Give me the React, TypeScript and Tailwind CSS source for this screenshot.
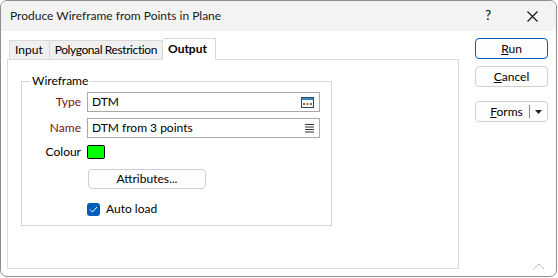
import React from "react";

const font = { fontFamily: 'Lato, "Noto Sans", "Liberation Sans", sans-serif' };

function TypeIcon() {
  return (
    <svg width="13" height="11" viewBox="0 0 13 11">
      <rect x="0.5" y="0.5" width="12" height="10" fill="#ffffff" stroke="#2b4a6b" />
      <rect x="1" y="1" width="11" height="2" fill="#3c87c8" />
      <rect x="2" y="6" width="2" height="2" fill="#9a6b2a" />
      <rect x="5.5" y="6" width="2" height="2" fill="#9a6b2a" />
      <rect x="9" y="6" width="2" height="2" fill="#9a6b2a" />
    </svg>
  );
}

function ListIcon() {
  return (
    <svg width="9" height="9" viewBox="0 0 9 9">
      <rect x="0" y="0" width="9" height="1" fill="#333" />
      <rect x="0" y="2.5" width="9" height="1" fill="#333" />
      <rect x="0" y="5" width="9" height="1" fill="#333" />
      <rect x="0" y="7.5" width="9" height="1" fill="#333" />
    </svg>
  );
}

function Field({ label, value, icon }: { label: string; value: string; icon: React.ReactNode }) {
  return (
    <div className="flex items-center h-[20px]">
      <span className="w-[59px] text-right text-[12px] text-[#7a1010]">{label}</span>
      <div className="ml-[6px] flex h-[20px] w-[233px] items-center justify-between border border-[#a9a9a9] bg-white pl-[4px] pr-[5px] text-[12px] text-black">
        <span>{value}</span>
        {icon}
      </div>
    </div>
  );
}

export default function App() {
  return (
    <div className="h-[278px] w-[558px] bg-white" style={font}>
      <div className="flex h-[277px] w-[557px] flex-col overflow-hidden rounded-[7px] border border-[#8f8f8f] bg-white">
        <div className="flex h-[30px] shrink-0 items-center bg-[#f3f3f3] pl-[9px]">
          <span className="text-[12px] text-[#1a1a1a]">Produce Wireframe from Points in Plane</span>
          <span className="ml-auto mr-[36px] text-[13px] text-black">?</span>
          <svg width="11" height="11" viewBox="0 0 11 11" className="mr-[18px]">
            <path d="M0.5 0.5 L10.5 10.5 M10.5 0.5 L0.5 10.5" stroke="#111" strokeWidth="1.1" />
          </svg>
        </div>
        <div className="flex flex-1 pl-[6px]">
          <div className="flex w-[452px] flex-col">
            <div className="flex h-[28px] items-end pl-[2px] text-[12px] tracking-[-0.4px] text-black">
              <div className="flex h-[19px] items-center border border-b-0 border-[#d9d9d9] bg-[#f0f0f0] pl-[5px] pr-[6px] tracking-normal">Input</div>
              <div className="flex h-[19px] items-center border border-b-0 border-l-0 border-[#d9d9d9] bg-[#f0f0f0] pl-[5px] pr-[5px]">Polygonal Restriction</div>
              <div className="relative z-10 -mb-px flex h-[22px] items-center border border-b-0 border-l-0 border-[#d9d9d9] bg-white pl-[5px] pr-[8px] pb-[2px] font-bold tracking-normal">Output</div>
            </div>
            <div className="h-[210px] border border-[#d9d9d9] bg-white pl-[13px] pt-[21px]">
              <div className="relative h-[145px] w-[311px] border border-[#d5d5d5]">
                <span className="absolute -top-[9px] left-[8px] bg-white px-[2px] text-[12px] leading-[16px] text-black">Wireframe</span>
                <div className="flex flex-col pt-[10px]">
                  <Field label="Type" value="DTM" icon={<TypeIcon />} />
                  <div className="h-[6px]" />
                  <Field label="Name" value="DTM from 3 points" icon={<ListIcon />} />
                  <div className="mt-[7px] flex h-[14px] items-center">
                    <span className="w-[59px] text-right text-[12px] text-black">Colour</span>
                    <div className="ml-[6px] h-[14px] w-[18px] rounded-[2px] border border-black bg-[#00ff00]" />
                  </div>
                  <div className="ml-[66px] mt-[10px] flex h-[20px] w-[118px] items-center justify-center rounded-[4px] border border-[#cfcfcf] bg-[#fdfdfd] text-[12px] text-black">
                    Attributes...
                  </div>
                  <div className="ml-[65px] mt-[11px] flex items-center">
                    <div className="flex h-[13px] w-[13px] items-center justify-center rounded-[3px] bg-[#005fb8]">
                      <svg width="9" height="7" viewBox="0 0 9 7">
                        <path d="M1 3.5 L3.5 6 L8 1" stroke="white" strokeWidth="1" fill="none" />
                      </svg>
                    </div>
                    <span className="ml-[6px] text-[12px] text-black">Auto load</span>
                  </div>
                </div>
              </div>
            </div>
          </div>
          <div className="ml-[16px] flex w-[73px] flex-col pt-[7px] text-[12px] text-black">
            <div className="flex h-[21px] items-center justify-center rounded-[4px] border border-[#005fb8] bg-[#fdfdfd]">
              <span><span className="underline">R</span>un</span>
            </div>
            <div className="mt-[7px] flex h-[21px] items-center justify-center rounded-[4px] border border-[#d0d0d0] bg-[#fdfdfd]">
              <span><span className="underline">C</span>ancel</span>
            </div>
            <div className="mt-[14px] flex h-[21px] items-center rounded-[4px] border border-[#d0d0d0] bg-[#fdfdfd]">
              <span className="flex-1 pl-[8px] text-center"><span className="underline">F</span>orms</span>
              <div className="h-[13px] w-px bg-[#8a8a8a]" />
              <svg width="7" height="4" viewBox="0 0 7 4" className="mx-[5px]">
                <path d="M0 0 L7 0 L3.5 4 Z" fill="#222" />
              </svg>
            </div>
            <div className="mt-auto mb-[6px] ml-auto mr-[3px]">
              <svg width="12" height="7" viewBox="0 0 12 7">
                <path d="M0.5 6.5 L6 1 L11.5 6.5" stroke="#8a8a8a" strokeWidth="1" fill="none" strokeDasharray="1 1" />
              </svg>
            </div>
          </div>
        </div>
      </div>
    </div>
  );
}
